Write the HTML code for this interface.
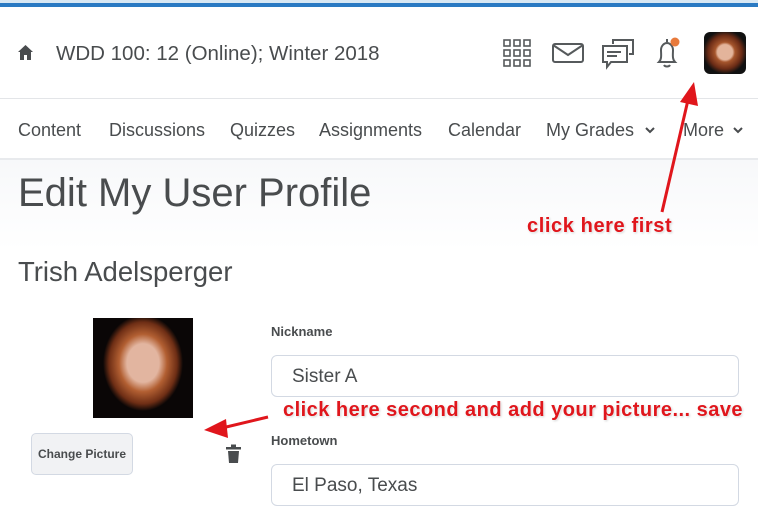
<!DOCTYPE html>
<html><head><meta charset="utf-8"><style>
*{margin:0;padding:0;box-sizing:border-box}
body{width:758px;height:491px;overflow:hidden;background:#fff;font-family:"Liberation Sans",sans-serif;color:#494c4e;position:relative}
.a{position:absolute}
.red{color:#e0161c;font-weight:bold;font-family:"Liberation Sans",sans-serif;text-shadow:0 0 2px #fff,1px 1px 2px #ccc;white-space:nowrap}
</style></head><body>
<div class="a" style="left:0;top:0;width:758px;height:3px;background:#d8e8f4"></div>
<div class="a" style="left:0;top:3px;width:758px;height:4px;background:#2a7ac3"></div>
<div class="a" style="left:0;top:98px;width:758px;height:1px;background:#e3e5e8"></div>
<div class="a" style="left:0;top:158px;width:758px;height:2px;background:#e8eaed"></div>
<div class="a" style="left:0;top:160px;width:758px;height:90px;background:linear-gradient(#f7f8fa,#fff)"></div>
<svg class="a" style="left:17px;top:44px" width="17" height="17" viewBox="0 0 17 17"><path d="M8.5 1L1 8h2v8h4v-5h3v5h4V8h2z" fill="#494c4e"/></svg>
<div class="a" style="left:56px;top:42px;font-size:20.5px;color:#494c4e">WDD 100: 12 (Online); Winter 2018</div>
<svg class="a" style="left:503px;top:39px" width="30" height="30" viewBox="0 0 30 30" fill="none" stroke="#565a5c" stroke-width="1.6"><g><rect x="1" y="1" width="6" height="6"/><rect x="11" y="1" width="6" height="6"/><rect x="21" y="1" width="6" height="6"/><rect x="1" y="11" width="6" height="6"/><rect x="11" y="11" width="6" height="6"/><rect x="21" y="11" width="6" height="6"/><rect x="1" y="21" width="6" height="6"/><rect x="11" y="21" width="6" height="6"/><rect x="21" y="21" width="6" height="6"/></g></svg>
<svg class="a" style="left:552px;top:43px" width="32" height="20" viewBox="0 0 32 20" fill="none" stroke="#565a5c" stroke-width="2"><rect x="1" y="1" width="30" height="18" rx="2"/><path d="M1 2l15 10L31 2"/></svg>
<svg class="a" style="left:601px;top:38px" width="34" height="32" viewBox="0 0 34 32" fill="none" stroke="#565a5c" stroke-width="2"><path d="M12 6V2h20v14h-4"/><path d="M2 8h24v16H10l-4 5v-5H2z"/><path d="M6 14h14M6 18h10"/></svg>
<svg class="a" style="left:653px;top:36px" width="30" height="34" viewBox="0 0 30 34" fill="none" stroke="#565a5c" stroke-width="2"><path d="M14 3v3M6 26c3-3 2-8 2-12 0-4 3-7 6-7s6 3 6 7c0 4-1 9 2 12z M11 29c1 2 5 2 6 0"/><circle cx="22" cy="6" r="4.5" fill="#e87a3c" stroke="none"/></svg>
<div class="a" style="left:704px;top:32px;width:42px;height:42px;border-radius:6px;background:radial-gradient(circle at 50% 48%,#e3b49b 0 25%,#a5552c 33%,#6c2c16 55%,#111 72%)"></div>
<div class="a" style="left:18px;top:120px;font-size:18px;white-space:nowrap;color:#494c4e">
<span style="position:absolute;left:0">Content</span><span style="position:absolute;left:91px">Discussions</span><span style="position:absolute;left:212px">Quizzes</span><span style="position:absolute;left:301px">Assignments</span><span style="position:absolute;left:430px">Calendar</span><span style="position:absolute;left:528px">My&nbsp;Grades</span><span style="position:absolute;left:665px">More</span></div>
<svg class="a" style="left:645px;top:127px" width="10" height="7" viewBox="0 0 10 7"><path d="M1 1l4 4 4-4" stroke="#494c4e" stroke-width="2" fill="none"/></svg>
<svg class="a" style="left:733px;top:127px" width="10" height="7" viewBox="0 0 10 7"><path d="M1 1l4 4 4-4" stroke="#494c4e" stroke-width="2" fill="none"/></svg>
<div class="a" style="left:18px;top:171px;font-size:40px;color:#494c4e">Edit My User Profile</div>
<div class="a" style="left:18px;top:256px;font-size:27.5px;color:#494c4e">Trish Adelsperger</div>
<div class="a" style="left:93px;top:318px;width:100px;height:100px;background:radial-gradient(ellipse 40% 48% at 50% 45%,#e2b5a0 0 40%,#b25f32 60%,#6e2e15 85%,#0a0606 100%)"></div>
<div class="a" style="left:271px;top:324px;font-size:13px;font-weight:bold;color:#494c4e">Nickname</div>
<div class="a" style="left:271px;top:355px;width:468px;height:42px;border:1px solid #d3d9e3;border-radius:6px;padding:10px 20px;font-size:19px">Sister A</div>
<div class="a" style="left:271px;top:433px;font-size:13px;font-weight:bold;color:#494c4e">Hometown</div>
<div class="a" style="left:271px;top:464px;width:468px;height:42px;border:1px solid #d3d9e3;border-radius:6px;padding:10px 20px;font-size:19px">El Paso, Texas</div>
<div class="a" style="left:31px;top:433px;width:102px;height:42px;border:1px solid #d3d9e3;border-radius:5px;background:#f1f2f4;text-align:center;line-height:40px;font-size:12px;font-weight:bold;color:#494c4e">Change Picture</div>
<svg class="a" style="left:226px;top:444px" width="15" height="19" viewBox="0 0 15 19"><rect x="0" y="3" width="15" height="2.5" fill="#494c4e"/><rect x="5" y="0.5" width="5" height="3" fill="#494c4e"/><path d="M2 7h11l-1 12H3z" fill="#494c4e"/></svg>
<div class="a red" style="left:527px;top:215px;font-size:20px;letter-spacing:0.6px">click here first</div>
<div class="a red" style="left:283px;top:399px;font-size:20px;letter-spacing:0.48px">click here second and add your picture... save</div>
<svg class="a" style="left:0;top:0" width="758" height="491" viewBox="0 0 758 491"><path d="M662 212L688 100" stroke="#e0161c" stroke-width="3"/><path d="M680 102l14-20 4 24z" fill="#e0161c"/><path d="M268 417L222 428" stroke="#e0161c" stroke-width="3"/><path d="M226 419l-22 11 24 8z" fill="#e0161c"/></svg>
</body></html>
